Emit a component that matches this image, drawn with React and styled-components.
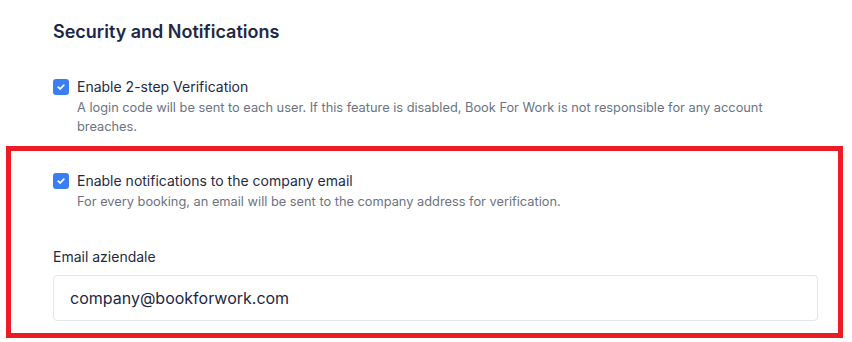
import React from "react"
import styled, { createGlobalStyle } from "styled-components"

const GlobalStyle = createGlobalStyle`
    html, body {
        margin: 0;
        padding: 0;
        background: #ffffff;
    }
    body {
        font-family: Inter, "Noto Sans", sans-serif;
        -webkit-font-smoothing: antialiased;
    }
`

const options = [
    {
        id: "twoStep",
        label: "Enable 2-step Verification",
        hint: "A login code will be sent to each user. If this feature is disabled, Book For Work is not responsible for any account breaches.",
    },
    {
        id: "companyMail",
        label: "Enable notifications to the company email",
        hint: "For every booking, an email will be sent to the company address for verification.",
    },
]

function CheckIcon() {
    return (
        <svg width="10" height="10" viewBox="0 0 10 10" fill="none">
            <path d="M2.2 5.2 L4.2 7 L7.8 3.2" stroke="#fff" strokeWidth="1.7" strokeLinecap="round" strokeLinejoin="round" />
        </svg>
    )
}

function Option({ label, hint }) {
    return (
        <OptionRow>
            <Box><CheckIcon /></Box>
            <OptionText>
                <OptionLabel>{label}</OptionLabel>
                <Hint>{hint}</Hint>
            </OptionText>
        </OptionRow>
    )
}

function App() {
    return (
        <Page>
            <GlobalStyle />
            <Title>Security and Notifications</Title>
            <Options>
                {options.map(o => <Option key={o.id} {...o} />)}
            </Options>
            <Field>
                <FieldLabel>Email aziendale</FieldLabel>
                <Input defaultValue="company@bookforwork.com" />
            </Field>
            <Highlight />
        </Page>
    )
}

export default App;

const Page = styled.div`
    position: relative;
    width: 852px;
    height: 342px;
    box-sizing: border-box;
    padding: 20px 34px 0 53px;
    overflow: hidden;
`

const Title = styled.h2`
    margin: 0;
    font-size: 18px;
    line-height: 24px;
    font-weight: 600;
    color: #1d2846;
`

const Options = styled.div`
    margin-top: 33px;
    display: flex;
    flex-direction: column;
    gap: 35px;
`

const OptionRow = styled.div`
    display: flex;
    align-items: flex-start;
    gap: 8px;
`

const Box = styled.span`
    flex: none;
    width: 16px;
    height: 16px;
    margin-top: 2px;
    border-radius: 3px;
    background: #3b7ef2;
    display: flex;
    align-items: center;
    justify-content: center;
`

const OptionText = styled.div`
    display: flex;
    flex-direction: column;
    gap: 1px;
    max-width: 705px;
`

const OptionLabel = styled.span`
    font-size: 14px;
    line-height: 20px;
    color: #1f2a44;
`

const Hint = styled.span`
    font-size: 12.8px;
    line-height: 19px;
    color: #6b7382;
`

const Field = styled.div`
    margin-top: 36px;
    display: flex;
    flex-direction: column;
    gap: 8px;
`

const FieldLabel = styled.label`
    font-size: 14px;
    line-height: 20px;
    color: #1f2a44;
`

const Input = styled.input`
    box-sizing: border-box;
    width: 765px;
    height: 46px;
    padding: 0 16px;
    border: 1px solid #e3e6eb;
    border-radius: 4px;
    font-family: Inter, "Noto Sans", sans-serif;
    font-size: 16px;
    color: #1d2846;
    outline: none;
`

const Highlight = styled.div`
    position: absolute;
    left: 6px;
    top: 146px;
    width: 837px;
    height: 192px;
    box-sizing: border-box;
    border: 5px solid #ec1c24;
    pointer-events: none;
`
